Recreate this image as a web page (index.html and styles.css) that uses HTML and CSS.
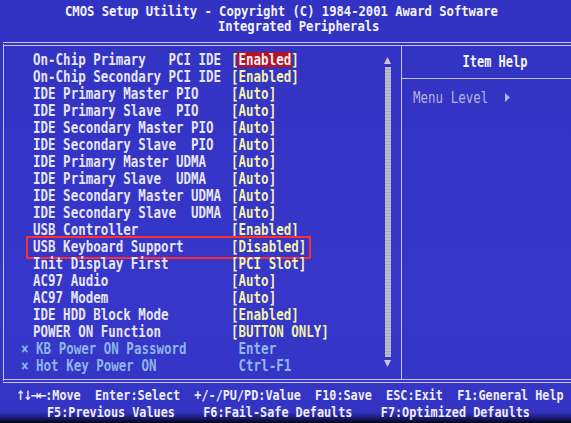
FILE: index.html
```html
<!DOCTYPE html>
<html>
<head>
<meta charset="utf-8">
<title>CMOS Setup Utility</title>
<link rel="stylesheet" href="styles.css">
</head>
<body>
<div class="screen">
  <header class="title">
    <div class="t1"><span>CMOS Setup Utility - Copyright (C) 1984-2001 Award Software</span></div>
    <div class="t2"><span>Integrated Peripherals</span></div>
  </header>
  <main class="frame">
    <section class="list">
      <div class="rows">
        <div class="row"><span class="lbl">On-Chip Primary   PCI IDE</span><span class="val">[<span class="sel">Enabled</span>]</span></div>
        <div class="row"><span class="lbl">On-Chip Secondary PCI IDE</span><span class="val">[Enabled]</span></div>
        <div class="row"><span class="lbl">IDE Primary Master PIO</span><span class="val">[Auto]</span></div>
        <div class="row"><span class="lbl">IDE Primary Slave  PIO</span><span class="val">[Auto]</span></div>
        <div class="row"><span class="lbl">IDE Secondary Master PIO</span><span class="val">[Auto]</span></div>
        <div class="row"><span class="lbl">IDE Secondary Slave  PIO</span><span class="val">[Auto]</span></div>
        <div class="row"><span class="lbl">IDE Primary Master UDMA</span><span class="val">[Auto]</span></div>
        <div class="row"><span class="lbl">IDE Primary Slave  UDMA</span><span class="val">[Auto]</span></div>
        <div class="row"><span class="lbl">IDE Secondary Master UDMA</span><span class="val">[Auto]</span></div>
        <div class="row"><span class="lbl">IDE Secondary Slave  UDMA</span><span class="val">[Auto]</span></div>
        <div class="row"><span class="lbl">USB Controller</span><span class="val">[Enabled]</span></div>
        <div class="row marked"><span class="lbl">USB Keyboard Support</span><span class="val">[Disabled]</span><span class="mark"></span></div>
        <div class="row"><span class="lbl">Init Display First</span><span class="val">[PCI Slot]</span></div>
        <div class="row"><span class="lbl">AC97 Audio</span><span class="val">[Auto]</span></div>
        <div class="row"><span class="lbl">AC97 Modem</span><span class="val">[Auto]</span></div>
        <div class="row"><span class="lbl">IDE HDD Block Mode</span><span class="val">[Enabled]</span></div>
        <div class="row"><span class="lbl">POWER ON Function</span><span class="val">[BUTTON ONLY]</span></div>
        <div class="row dis"><span class="lbl">× KB Power ON Password</span><span class="val"> Enter</span></div>
        <div class="row dis"><span class="lbl">× Hot Key Power ON</span><span class="val"> Ctrl-F1</span></div>
      </div>
      <div class="scroll">
        <svg class="arrow" width="7" height="7" viewBox="0 0 7 7"><polygon points="3.5,0 7,7 0,7"/></svg>
        <div class="track"></div>
        <svg class="arrow" width="7" height="7" viewBox="0 0 7 7"><polygon points="0,0 7,0 3.5,7"/></svg>
      </div>
    </section>
    <aside class="help">
      <div class="help-head"><span>Item Help</span></div>
      <div class="help-body">
        <span class="lvl">Menu Level</span>
        <svg class="tri" width="5" height="9" viewBox="0 0 5 9"><polygon points="0,0 5,4.5 0,9"/></svg>
      </div>
    </aside>
  </main>
  <footer class="keys">
    <div class="k1"><span><span class="arw">↑↓→←</span>:Move  Enter:Select  +/-/PU/PD:Value  F10:Save  ESC:Exit  F1:General Help</span></div>
    <div class="k2"><span>F5:Previous Values    F6:Fail-Safe Defaults    F7:Optimized Defaults</span></div>
  </footer>
</div>
</body>
</html>
```

FILE: styles.css
```css
html, body {
  margin: 0;
  padding: 0;
}

body {
  width: 571px;
  height: 423px;
  overflow: hidden;
  background: #0a0a30;
}

.screen {
  width: 571px;
  height: 423px;
  overflow: hidden;
  display: flex;
  flex-direction: column;
  background: linear-gradient(to bottom, #3232c2 0, #3636ca 300px, #3434c4 412px, #1a1a70 418px, #050518 423px);
  font-family: "DejaVu Sans Mono", "Liberation Mono", monospace;
  font-weight: bold;
  color: #ececf8;
}

/* title */
.title {
  padding-top: 4px;
  font-size: 12.2px;
  line-height: 15px;
  color: #f4f4ff;
}
.title div {
  height: 15px;
}
.title span {
  display: inline-block;
  white-space: pre;
  transform: scaleY(1.2);
}
.t1 { padding-left: 65px; }
.t2 { padding-left: 218px; }

/* frame */
.frame {
  margin: 8px 0 0 3px;
  width: 590px;
  flex: none;
  display: flex;
  border-top: 4px double #c4c4e2;
  border-bottom: 4px double #c4c4e2;
  border-left: 1px solid #c4c4e2;
}

.list {
  width: 397px;
  height: 333px;
  display: flex;
}

.rows {
  flex: 1;
  padding: 5px 0 0 29px;
}

.row {
  position: relative;
  display: flex;
  align-items: center;
  height: 17px;
  font-size: 12.5px;
  line-height: 13px;
}
.row .lbl,
.row .val {
  display: inline-block;
  white-space: pre;
  transform: scaleY(1.2);
}
.lbl {
  width: 198px;
  flex: none;
  color: #e6e6f6;
}
.val {
  color: #f2f2aa;
}
.sel {
  display: inline-block;
  background: #b01428;
  color: #fff0f0;
  padding: 0 1px 0 2px;
  margin: 0 -1px 0 -2px;
  line-height: 13px;
}
.dis .lbl {
  margin-left: -12px;
  width: 210px;
  color: #8cb6ea;
}
.dis .val {
  color: #90bae8;
}

.mark {
  position: absolute;
  left: -7px;
  top: -2px;
  width: 281px;
  height: 19px;
  border: 2px solid #ff2e2e;
}

/* scrollbar */
.scroll {
  width: 7px;
  margin-right: 10px;
  padding: 11px 0 12px;
  display: flex;
  flex-direction: column;
  align-items: center;
  gap: 3px;
}
.arrow {
  display: block;
  fill: #c8c8d8;
}
.track {
  flex: 1;
  width: 6px;
  background: repeating-linear-gradient(to bottom, #bcbccc 0, #bcbccc 2px, #a8a8c4 2px, #a8a8c4 3px);
}

/* help panel */
.help {
  flex: 1;
  border-left: 1px solid #c4c4e2;
  display: flex;
  flex-direction: column;
}
.help-head {
  height: 32px;
  border-bottom: 1px solid #c4c4e2;
  display: flex;
  align-items: center;
  justify-content: center;
  padding-right: 6px;
  font-size: 12px;
  color: #f4f4ff;
}
.help-head span {
  display: inline-block;
  transform: scaleY(1.25);
}
.help-body {
  padding: 10px 0 0 11px;
  height: 17px;
  display: flex;
  align-items: center;
  font-size: 12.5px;
  font-weight: normal;
  color: #b4b4dc;
}
.lvl {
  display: inline-block;
  transform: scaleY(1.2);
}
.tri {
  margin-left: 17px;
  fill: #b4b4dc;
}

/* footer keys */
.keys {
  padding-top: 4px;
  font-size: 11.8px;
  line-height: 17px;
  color: #eeeefa;
}
.keys div {
  height: 17px;
}
.keys span {
  display: inline-block;
  white-space: pre;
  transform: scaleY(1.25);
}
.keys .arw {
  transform: none;
  font-family: "DejaVu Sans", sans-serif;
  font-size: 10.5px;
  letter-spacing: -1.5px;
}
.k1 { padding-left: 16px; }
.k2 { padding-left: 47px; }
```
